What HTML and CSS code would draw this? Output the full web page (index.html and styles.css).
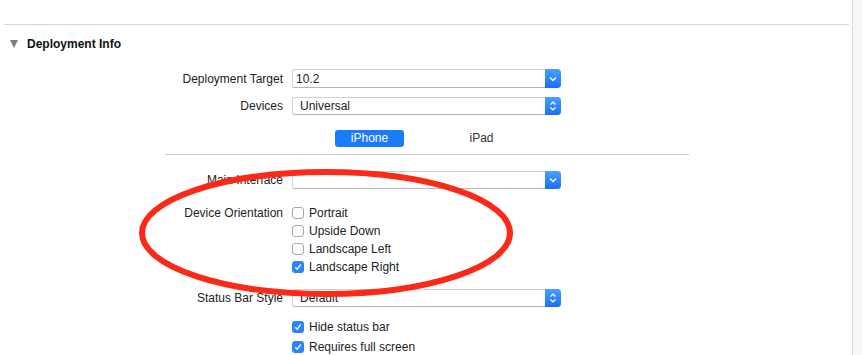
FILE: index.html
```html
<!DOCTYPE html>
<html lang="en">
<head>
  <meta charset="UTF-8" />
  <title>Deployment Info</title>
  <link rel="stylesheet" href="styles.css">
</head>
<body>
  <div class="window">
    <div class="main">
      <div class="clipped">
        <span class="clip-a">Signing Certificate   iPhone Developer</span>
        <span class="clip-b">(gqyp)</span>
      </div>
      <div class="section-head">
        <span class="disclosure"></span>
        <h2>Deployment Info</h2>
      </div>

      <div class="row r-target">
        <label>Deployment Target</label>
        <div class="popup"><span>10.2</span><i class="stepper single"><svg width="8" height="6" viewBox="0 0 8 6"><path d="M1 1.5 4 4.5 7 1.5" fill="none" stroke="#fff" stroke-width="1.3"/></svg></i></div>
      </div>
      <div class="row r-devices">
        <label>Devices</label>
        <div class="popup"><span>Universal</span><i class="stepper"><svg width="8" height="12" viewBox="0 0 8 12"><path d="M1.5 4.5 4 2 6.5 4.5M1.5 7.5 4 10 6.5 7.5" fill="none" stroke="#fff" stroke-width="1.2"/></svg></i></div>
      </div>
      <div class="row r-seg">
        <label></label>
        <div class="segments">
          <span class="seg active">iPhone</span>
          <span class="seg">iPad</span>
        </div>
      </div>
      <div class="separator"></div>

      <div class="row r-interface">
        <label>Main Interface</label>
        <div class="popup"><span></span><i class="stepper single"><svg width="8" height="6" viewBox="0 0 8 6"><path d="M1 1.5 4 4.5 7 1.5" fill="none" stroke="#fff" stroke-width="1.3"/></svg></i></div>
      </div>

      <div class="row r-orient">
        <label>Device Orientation</label>
        <div class="checks">
          <div class="check"><span class="box"></span>Portrait</div>
          <div class="check"><span class="box"></span>Upside Down</div>
          <div class="check"><span class="box"></span>Landscape Left</div>
          <div class="check"><span class="box on"><svg width="8" height="8" viewBox="0 0 8 8"><path d="M1.3 4.2 3.2 6.2 6.8 1.4" fill="none" stroke="#fff" stroke-width="1.4"/></svg></span>Landscape Right</div>
        </div>
      </div>

      <div class="row r-status">
        <label>Status Bar Style</label>
        <div class="popup"><span>Default</span><i class="stepper"><svg width="8" height="12" viewBox="0 0 8 12"><path d="M1.5 4.5 4 2 6.5 4.5M1.5 7.5 4 10 6.5 7.5" fill="none" stroke="#fff" stroke-width="1.2"/></svg></i></div>
      </div>

      <div class="row r-hide">
        <label></label>
        <div class="checks wide">
          <div class="check"><span class="box on"><svg width="8" height="8" viewBox="0 0 8 8"><path d="M1.3 4.2 3.2 6.2 6.8 1.4" fill="none" stroke="#fff" stroke-width="1.4"/></svg></span>Hide status bar</div>
          <div class="check"><span class="box on"><svg width="8" height="8" viewBox="0 0 8 8"><path d="M1.3 4.2 3.2 6.2 6.8 1.4" fill="none" stroke="#fff" stroke-width="1.4"/></svg></span>Requires full screen</div>
        </div>
      </div>

      <svg class="annotation" width="852" height="355" viewBox="0 0 852 355">
        <ellipse cx="326" cy="233" rx="184" ry="61" fill="none" stroke="#fb2a18" stroke-width="6"/>
      </svg>
    </div>
    <div class="gutter"></div>
  </div>
</body>
</html>
```

FILE: styles.css
```css
* {
  box-sizing: border-box;
  margin: 0;
  padding: 0;
}
body {
  background: #fff;
  color: #222;
  font-family: 'Liberation Sans', Arial, sans-serif;
  font-size: 12px;
  overflow: hidden;
}
.window {
  display: flex;
  height: 355px;
}
.main {
  position: relative;
  width: 852px;
}
.gutter {
  flex: 1;
  background: #f7f7f7;
  border-left: 1px solid #dadada;
}

.clipped {
  height: 25px;
  margin: 0 3px 0 4px;
  border-bottom: 1px solid #d6d6d6;
  overflow: hidden;
  position: relative;
}
.clipped span {
  display: block;
  position: absolute;
  top: -14px;
  font-size: 12px;
  color: #222;
}
.clip-a { left: 190px; }
.clip-b { left: 460px; }

.section-head {
  display: flex;
  align-items: flex-start;
  gap: 9px;
  padding: 11px 0 0 10px;
  height: 44px;
}
.disclosure {
  width: 0;
  height: 0;
  margin-top: 4px;
  border-left: 4.5px solid transparent;
  border-right: 4.5px solid transparent;
  border-top: 8px solid #7f7f7f;
}
.section-head h2 {
  font-size: 12px;
  font-weight: bold;
  color: #111;
  line-height: 16px;
}

.row {
  display: grid;
  grid-template-columns: 283px 269px;
  column-gap: 9px;
  align-items: center;
}
.row label {
  text-align: right;
  line-height: 18px;
  white-space: nowrap;
}
.r-devices { margin-top: 9px; }
.r-seg { margin-top: 15px; }
.r-orient { margin-top: 15px; align-items: start; }
.r-status { margin-top: 13px; }
.r-hide { margin-top: 10px; }

.popup {
  display: flex;
  align-items: center;
  height: 18px;
  background: #fff;
  border: 1px solid #cfcfcf;
  border-bottom-color: #b5b5b5;
  border-radius: 3px;
}
.popup span {
  flex: 1;
  padding-left: 7px;
  line-height: 16px;
}
.r-target .popup span { padding-left: 3px; }
.r-target .popup { height: 19px; border-radius: 2px 4px 4px 2px; }
.stepper {
  display: flex;
  align-items: center;
  justify-content: center;
  width: 16px;
  height: calc(100% + 2px);
  margin: -1px -1px -1px 0;
  background: linear-gradient(#4aa0ff, #1670f5);
  border-radius: 0 4px 4px 0;
}

.segments {
  display: flex;
  padding-left: 43px;
}
.seg {
  width: 69px;
  height: 17px;
  line-height: 17px;
  text-align: center;
  border-radius: 3px;
  color: #333;
}
.seg + .seg { margin-left: 43px; }
.seg.active {
  background: #1b7cfb;
  color: #fff;
}
.separator {
  margin: 7px 0 16px 165px;
  width: 524px;
  border-top: 1px solid #c9c9c9;
}

.checks {
  display: flex;
  flex-direction: column;
}
.check {
  display: flex;
  align-items: center;
  gap: 5px;
  height: 18px;
}
.checks.wide .check { height: 20px; }
.box {
  display: flex;
  align-items: center;
  justify-content: center;
  width: 12px;
  height: 12px;
  border: 1px solid #a8a8a8;
  border-radius: 3px;
  background: #fff;
}
.box.on {
  border: none;
  background: #2a84fb;
}

.annotation {
  position: absolute;
  left: 0;
  top: 0;
  pointer-events: none;
}
```
